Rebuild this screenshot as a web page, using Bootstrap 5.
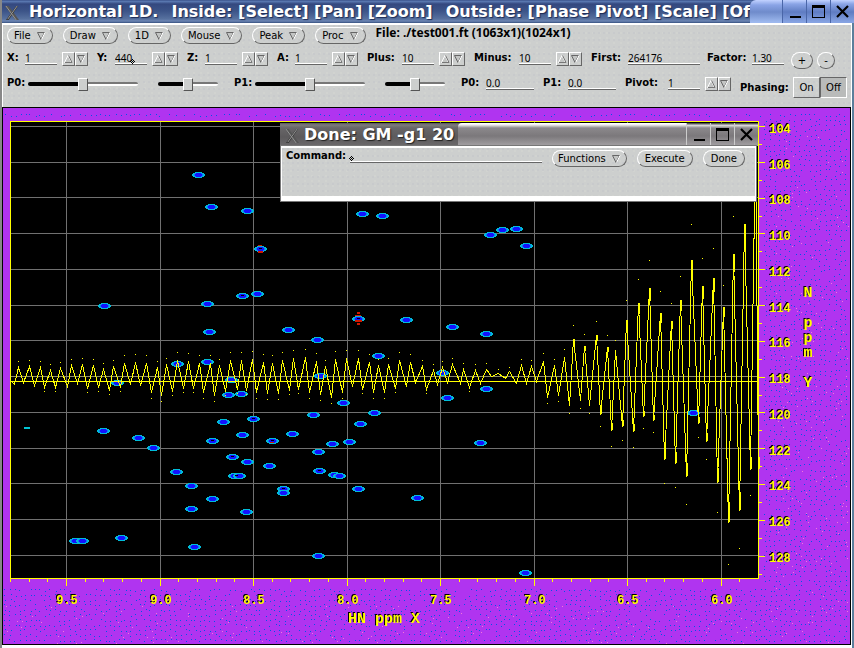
<!DOCTYPE html>
<html lang="en">
<head>
<meta charset="utf-8">
<meta name="viewport" content="width=device-width, initial-scale=1">
<title>Horizontal 1D</title>
<link href="https://cdn.jsdelivr.net/npm/bootstrap@5.3.0/dist/css/bootstrap.min.css" rel="stylesheet">
<style>
  :root { --panel: #cdcfce; --lo: #777; }
  body { font-family: "DejaVu Sans", sans-serif; font-size: 10px; line-height: 12px; color: #000; background: #fff; }
  .app-frame { border-left: 2px solid #888; border-right: 2px solid #5b7f9b; }
  .win-title { height: 23px; color: #fff; font-weight: 700; font-size: 16px; line-height: 23px; white-space: nowrap;
    background: linear-gradient(#2b3f78, #5f7fb8 1px, #34487f 4px, #3c5488 11px, #57719f 19px, #6d86b4 21px, #35507f); }
  .title-text { gap: 13px; text-shadow: 1px 1px 1px #1d2b55; }
  .title-logo { width: 27px; padding-left: 2px; }
  .title-tail { width: 32px; height: 23px; border-radius: 6px 0 0 0; background: linear-gradient(#c2d2ff, #8aa4e6 5px, #6f8bcb 12px, #9db8ee 22px); }
  .win-btn { width: 24px; height: 23px; padding: 0; border: 0; border-left: 1px solid #4a66a8; border-radius: 0; line-height: 0;
    background: linear-gradient(#c2d2ff, #8aa4e6 4px, #5f7cc2 12px, #86a3e2 22px); }
  .tool-panel { background-color: var(--panel); border-top: 2px solid #fff; border-left: 1px solid #fff; border-right: 1px solid #fff;
    padding: 2px 4px 9px 4px; }
  .speckle { background-image: radial-gradient(circle at 1px 1px, #c8cacc 1px, transparent 1px), radial-gradient(circle at 2px 3px, #d1d3d0 1px, transparent 1px);
    background-size: 5px 7px, 7px 5px; }
  .pill { height: 17px; padding: 0 6px; font-size: 10px; line-height: 14px; color: #000; background: transparent; border-radius: 9px;
    border: 1px solid; border-color: #fff #666 #666 #fff; display: inline-flex; align-items: center; justify-content: center; gap: 6px; }
  .pill:hover, .pill:focus { background: #d8dad9; }
  .lbl { font-weight: 700; margin: 0; white-space: nowrap; }
  .fname { font-family: "Noto Sans", sans-serif; font-weight: 700; font-size: 12px; }
  .fld { font-family: "Noto Sans", sans-serif; font-size: 10px; line-height: 12px; height: 13px; padding: 0; color: #000; background: transparent; border: 0; border-radius: 0;
    border-bottom: 1px solid #666; box-shadow: inset 0 -1px #fff; outline: 0; }
  .w-num { width: 32px; } .w-mid { width: 48px; } .w-big { width: 72px; }
  .l-one { width: 18px; } .l-rng { width: 21px; } .l-pln { width: 25px; } .l-plus { width: 35px; } .l-first { width: 37px; } .l-pivot { width: 43px; } .l-minus { width: 45px; }
  .grp { display: flex; align-items: flex-start; margin-right: 9px; }
  .grp-s { margin-right: 7px; } .grp-v { margin-right: 16px; } .grp-w { margin-right: 20px; }
  .spin { display: flex; margin-left: 5px; }
  .spin button { width: 13px; height: 14px; padding: 0; line-height: 0; background: transparent; border: 1px solid; border-color: #fff #666 #666 #fff; }
  .row-one { height: 25px; gap: 10px; }
  .row-two { height: 25px; }
  .sld { appearance: none; height: 13px; margin: 0; background: transparent; }
  .sld-l { width: 110px; } .sld-s { width: 60px; }
  .sld::-webkit-slider-runnable-track { height: 4px; border-radius: 2px;
    background: linear-gradient(#000, #000) 0 0 / 50% 100% no-repeat, linear-gradient(#777 50%, #fff 50%); }
  .sld::-webkit-slider-thumb { appearance: none; width: 10px; height: 13px; margin-top: -4px; background: var(--panel); border: 1px solid; border-color: #fff #555 #555 #fff; border-radius: 1px; }
  .round-btn { height: 17px; padding: 0; line-height: 14px; color: #000; background: transparent; border: 1px solid; border-color: #fff #666 #666 #fff; border-radius: 9px; }
  .w-plus { width: 22px; } .w-minus { width: 18px; margin-left: 4px; }
  .phase-lbl { padding-top: 5px; width: 55px; }
  .tog { width: 27px; height: 21px; padding: 0; font-size: 10px; background: transparent; border: 1px solid; border-color: #fff #666 #666 #fff; }
  .tog.active { background: #b9bbba; border-color: #666 #fff #fff #666; }
  .plot-box { background: #b034f0; border: 1px solid #000; margin-right: 1px; }
  .plot-box > svg { display: block; }
  .app-foot { height: 3px; }
  .dlg { left: 277px; top: 15px; width: 478px; }
  .dlg .win-title { background: linear-gradient(#5a585a, #7d7b7d 2px, #686668 5px, #5c5a5c 14px, #6a686a 22px); }
  .dlg .title-text { text-shadow: 1px 1px 1px #222; width: 150px; }
  .dlg-bar { border-radius: 4px 0 0 0; background: linear-gradient(#fff 1px, #e8e6e8 2px, #8c898c 5px, #7b787b 13px, #a09da0 22px); }
  .dlg .win-btn { border-left: 1px solid #ccc; background: linear-gradient(#555 1px, #e8e6e8 2px, #8c898c 5px, #7b787b 13px, #a09da0 22px); }
  .dlg-body { background-color: var(--panel); border: 1px solid #fff; border-top-width: 2px; border-bottom: 5px solid #fff; outline: 1px solid #777; height: 55px; margin: 0 2px 0 1px; padding: 2px 10px 0 4px; gap: 10px; }
  .pill-n { padding: 0 5px; } .pill-e { padding: 0 7px; }
  .caret { position: absolute; line-height: 0; }
  .caret-y { left: 33px; top: 7px; } .caret-c { left: -1px; top: 6px; }
  .tick-txt { font: 700 12px "Liberation Mono", monospace; }
  .axis-txt { font: 700 15px "Liberation Mono", monospace; }
  .under-shade { filter: drop-shadow(-1px -1px 0 #000); }
</style>
</head>
<body>
<svg class="d-none" aria-hidden="true">
  <symbol id="logo" viewBox="0 0 17 17"><path d="M1 1h4l11 15h-4z" fill="#555"/><path d="M15 1h-2L2 16h3z" fill="#383838"/><path d="M2 1l11 15M14 1L4 15" stroke="#9a9a9a" fill="none"/></symbol>
  <symbol id="dn" viewBox="0 0 9 8"><path d="M.5 .5h7L4 7.500z" fill="#c3c5c4" stroke="#666"/><path d="M8 .5L4.500 7.500" stroke="#fff" fill="none"/></symbol>
  <symbol id="up" viewBox="0 0 9 8"><path d="M.5 7.500h7L4 .5z" fill="#c3c5c4" stroke="#fff"/><path d="M4.500 .5L8 7.500H1" stroke="#777" fill="none"/></symbol>
  <symbol id="min" viewBox="0 0 23 23"><path d="M7 16h11v2H7z"/></symbol>
  <symbol id="max" viewBox="0 0 23 23"><path d="M5 5h13v13H5zM6 8v9h11V8z" fill-rule="evenodd"/></symbol>
  <symbol id="cls" viewBox="0 0 23 23"><path d="M6 6l11 11M17 6L6 17" stroke="#000" stroke-width="2.200"/></symbol>
  <symbol id="crt" viewBox="0 0 5 5"><path d="M2 0h1v1H2zM1 1h1v1H1zM3 1h1v1H3zM0 2h1v1H0zM2 2h1v1H2zM4 2h1v1H4zM1 3h1v1H1zM3 3h1v1H3zM2 4h1v1H2z"/></symbol>
</svg>

<div class="app-frame">
  <header class="win-title d-flex align-items-start">
    <div class="title-logo flex-shrink-0"><svg width="16" height="16"><use href="#logo"/></svg></div>
    <div class="title-text d-flex flex-fill"><span>Horizontal 1D.</span><span>Inside: [Select] [Pan] [Zoom]</span><span>Outside: [Phase Pivot] [Scale] [Of</span></div>
    <div class="title-tail flex-shrink-0"></div>
    <button class="win-btn flex-shrink-0" aria-label="Minimize"><svg width="23" height="23"><use href="#min"/></svg></button>
    <button class="win-btn flex-shrink-0" aria-label="Maximize"><svg width="23" height="23"><use href="#max"/></svg></button>
    <button class="win-btn flex-shrink-0" aria-label="Close"><svg width="23" height="23"><use href="#cls"/></svg></button>
  </header>

  <section class="tool-panel speckle">
    <div class="row-one d-flex align-items-start">
      <button class="pill">File <svg width="9" height="8"><use href="#dn"/></svg></button>
      <button class="pill">Draw <svg width="9" height="8"><use href="#dn"/></svg></button>
      <button class="pill">1D <svg width="9" height="8"><use href="#dn"/></svg></button>
      <button class="pill">Mouse <svg width="9" height="8"><use href="#dn"/></svg></button>
      <button class="pill">Peak <svg width="9" height="8"><use href="#dn"/></svg></button>
      <button class="pill">Proc <svg width="9" height="8"><use href="#dn"/></svg></button>
      <span class="fname text-nowrap">File: ./test001.ft (1063x1)(1024x1)</span>
    </div>
    <div class="row-two d-flex align-items-start">
      <div class="grp"><label class="lbl l-one" for="fx">X:</label><input class="fld w-num" id="fx" value="1"><span class="spin"><button aria-label="X up"><svg width="9" height="8"><use href="#up"/></svg></button><button aria-label="X down"><svg width="9" height="8"><use href="#dn"/></svg></button></span></div>
      <div class="grp position-relative"><label class="lbl l-one" for="fy">Y:</label><input class="fld w-num" id="fy" value="440"><span class="caret caret-y"><svg width="5" height="5"><use href="#crt"/></svg></span><span class="spin"><button aria-label="Y up"><svg width="9" height="8"><use href="#up"/></svg></button><button aria-label="Y down"><svg width="9" height="8"><use href="#dn"/></svg></button></span></div>
      <div class="grp"><label class="lbl l-one" for="fz">Z:</label><input class="fld w-num" id="fz" value="1"><span class="spin"><button aria-label="Z up"><svg width="9" height="8"><use href="#up"/></svg></button><button aria-label="Z down"><svg width="9" height="8"><use href="#dn"/></svg></button></span></div>
      <div class="grp"><label class="lbl l-one" for="fa">A:</label><input class="fld w-num" id="fa" value="1"><span class="spin"><button aria-label="A up"><svg width="9" height="8"><use href="#up"/></svg></button><button aria-label="A down"><svg width="9" height="8"><use href="#dn"/></svg></button></span></div>
      <div class="grp"><label class="lbl l-plus" for="fplus">Plus:</label><input class="fld w-num" id="fplus" value="10"><span class="spin"><button aria-label="Plus up"><svg width="9" height="8"><use href="#up"/></svg></button><button aria-label="Plus down"><svg width="9" height="8"><use href="#dn"/></svg></button></span></div>
      <div class="grp"><label class="lbl l-minus" for="fminus">Minus:</label><input class="fld w-num" id="fminus" value="10"><span class="spin"><button aria-label="Minus up"><svg width="9" height="8"><use href="#up"/></svg></button><button aria-label="Minus down"><svg width="9" height="8"><use href="#dn"/></svg></button></span></div>
      <div class="grp grp-s"><label class="lbl l-first" for="ffirst">First:</label><input class="fld w-big" id="ffirst" value="264176"></div>
      <div class="grp grp-s"><label class="lbl l-minus" for="ffac">Factor:</label><input class="fld w-num" id="ffac" value="1.30"></div>
      <button class="round-btn w-plus">+</button><button class="round-btn w-minus">-</button>
    </div>
    <div class="d-flex align-items-start">
      <div class="grp grp-w"><label class="lbl l-rng" for="s0">P0:</label><input type="range" class="sld sld-l" id="s0" value="50"></div>
      <div class="grp grp-v"><input type="range" class="sld sld-s" aria-label="P0 fine" value="50"></div>
      <div class="grp grp-w"><label class="lbl l-rng" for="s1">P1:</label><input type="range" class="sld sld-l" id="s1" value="50"></div>
      <div class="grp grp-v"><input type="range" class="sld sld-s" aria-label="P1 fine" value="50"></div>
      <div class="grp"><label class="lbl l-pln" for="p0">P0:</label><input class="fld w-mid" id="p0" value="0.0"></div>
      <div class="grp"><label class="lbl l-pln" for="p1">P1:</label><input class="fld w-mid" id="p1" value="0.0"></div>
      <div class="grp"><label class="lbl l-pivot" for="pv">Pivot:</label><input class="fld w-num" id="pv" value="1"><span class="spin"><button aria-label="Pivot up"><svg width="9" height="8"><use href="#up"/></svg></button><button aria-label="Pivot down"><svg width="9" height="8"><use href="#dn"/></svg></button></span></div>
      <span class="lbl phase-lbl">Phasing:</span>
      <div class="d-flex flex-shrink-0"><button class="tog">On</button><button class="tog active">Off</button></div>
    </div>
  </section>

  <main class="plot-box position-relative">
    <svg class="w-100" viewBox="3 108 847 536" role="img" aria-label="Spectrum: N ppm Y against HN ppm X">
      <g id="dots" shape-rendering="crispEdges"></g>
      <path d="M10 121h749v458H10z" fill="#000"/>
      <g id="grid" shape-rendering="crispEdges" fill="none"></g>
      <g id="peaks" shape-rendering="crispEdges"></g>
      <g id="wave" shape-rendering="crispEdges"></g>
      <g class="under-shade" fill="#ff0" id="names"></g>
    </svg>

    <section class="dlg position-absolute">
      <div class="win-title d-flex">
        <div class="flex-shrink-0 ps-1 pe-1"><svg width="16" height="16"><use href="#logo"/></svg></div>
        <div class="title-text flex-shrink-0">Done: GM -g1 20</div>
        <div class="dlg-bar flex-fill ms-1"></div>
        <button class="win-btn" aria-label="Minimize"><svg width="23" height="23"><use href="#min"/></svg></button>
        <button class="win-btn" aria-label="Maximize"><svg width="23" height="23"><use href="#max"/></svg></button>
        <button class="win-btn" aria-label="Close"><svg width="23" height="23"><use href="#cls"/></svg></button>
      </div>
      <div class="dlg-body speckle d-flex align-items-start">
        <div class="d-flex flex-fill">
          <label class="lbl me-1" for="cmd">Command:</label>
          <div class="position-relative flex-fill"><input class="fld w-100 d-block" id="cmd"><span class="caret caret-c"><svg width="5" height="5"><use href="#crt"/></svg></span></div>
        </div>
        <button class="pill pill-n">Functions <svg width="9" height="8"><use href="#dn"/></svg></button>
        <button class="pill pill-e">Execute</button>
        <button class="pill pill-e">Done</button>
      </div>
    </section>
  </main>
  <div class="app-foot"></div>
</div>

<script>
const put = (id, html) => document.getElementById(id).innerHTML = html;

// Grid, frame and ticks
const gx = [66, 160, 253, 347, 440, 534, 627, 721];
const gy = [126, 162, 197, 233, 269, 305, 340, 376, 412, 448, 483, 519, 555];
let g = '', t = '';
gx.forEach(x => { g += `M${x}.5 122V578`; });
gy.forEach(y => { g += `M11 ${y}.5H758`; });
for (let i = -3; i <= 36; i++) {
  const x = Math.round(66 + i * 18.7);
  if (x < 758) t += `M${x}.5 579v${i % 5 ? 3 : 7}`;
}
for (let i = 0; i <= 25; i++) {
  const y = Math.round(126 + i * 17.9);
  if (y < 578) t += `M759 ${y}.5h${i % 2 ? 3 : 6}`;
}
put('grid', `<path d="${g}" stroke="#707070"/><path d="M11 376.5H758" stroke="#8f8c6a"/><path d="M10.5 121.5h748v457h-748z${t}" stroke="#ff0"/>`);

// Axis labels
const name = (c, x, y, s) => `<text class="${c}" text-anchor="middle" x="${x}" y="${y}">${s}</text>`;
let n = '';
gx.forEach((x, i) => n += name('tick-txt', x + 1, 604, (9.5 - i / 2).toFixed(1)));
gy.forEach((y, i) => n += name('tick-txt', 780, y + 7, 104 + 2 * i));
n += name('axis-txt', 384, 623, 'HN ppm X');
[['N', 297], ['p', 327], ['p', 342], ['m', 357], ['Y', 387]].forEach(([s, y]) => n += name('axis-txt', 808, y, s));
put('names', n);

// Contour peaks
const pk = [[198,174],[211,206],[247,210],[260,248],[242,295],[257,293],[104,305],[207,303],[209,331],[288,329],[177,363],[207,361],[117,382],[231,379],[228,394],[241,393],[103,430],[138,437],[153,447],[223,421],[253,418],[242,434],[212,440],[272,440],[232,456],[247,461],[269,465],[176,471],[234,475],[239,475],[317,339],[358,318],[406,319],[452,326],[486,333],[378,355],[320,375],[442,372],[486,388],[447,397],[343,402],[313,414],[374,412],[360,423],[292,433],[332,443],[349,441],[480,442],[318,451],[319,470],[334,474],[339,475],[693,412],[191,485],[212,498],[191,508],[246,511],[75,540],[82,540],[121,537],[194,546],[283,488],[283,492],[358,488],[417,497],[318,555],[525,572],[362,213],[382,215],[490,234],[502,229],[516,228],[526,245]];
const core = [[260,248],[242,295],[272,440],[253,418],[232,456],[236,475],[358,318],[283,488],[212,440],[319,470]];
let p = '<path d="M24 427h6v2h-6z" fill="#00c4d4"/>', red = '<path d="M258 245h4v1h-4zM258 251h5v2h-5zM270 442h4v1h-4zM355 315h6v1h-6zM355 320h7v2h-7zM357 312h3v2h-3zM357 323h3v2h-3z" fill="#d01800"/>';
pk.forEach(([x, y]) => {
  p += `<path d="M${x-3} ${y-2}h7v1h2v1h1v2h-1v1h-2v1h-7v-1h-2v-1h-1v-2h1v-1h2z" fill="#00bcd8"/><path d="M${x-3} ${y-1}h7v1h1v2h-1v1h-7v-1h-1v-2h1z" fill="#0a78ff"/><path d="M${x-2} ${y-1}h5v1h1v2h-1v1h-5v-1h-1v-2h1z" fill="#1212ff"/>`;
});
core.forEach(([x, y]) => p += `<path d="M${x-1} ${y}h3v1h-3z" fill="#000"/>`);
put('peaks', p + red);

// Trace: alternating maxima and minima
const hi = [[18,367],[29,366],[40,367],[50,370],[60,368],[71,365],[82,364],[93,365],[103,369],[113,366],[124,363],[135,362],[146,363],[157,367],[166,364],[177,360],[188,361],[199,363],[210,363],[219,365],[230,360],[241,360],[252,359],[263,362],[272,363],[282,360],[293,358],[305,357],[316,361],[325,366],[335,359],[346,358],[358,358],[369,362],[378,365],[388,364],[399,360],[410,362],[422,366],[433,370],[442,367],[452,364],[463,369],[475,370],[486,369],[498,373],[509,371],[521,365],[531,366],[543,361],[554,365],[564,357],[573,339],[584,346],[596,335],[607,347],[615,350],[626,320],[638,303],[649,288],[660,313],[671,321],[680,300],[691,260],[702,286],[713,278],[723,307],[733,254],[744,224],[755,140]];
const lo = [[23,382],[34,385],[44,387],[55,387],[67,386],[77,383],[87,388],[98,387],[109,390],[120,387],[130,384],[140,385],[151,392],[161,395],[172,391],[183,388],[193,388],[203,392],[214,395],[225,391],[237,389],[246,390],[256,392],[267,393],[278,393],[289,390],[298,389],[309,392],[320,394],[331,397],[342,392],[352,386],[362,389],[373,392],[384,392],[395,388],[406,386],[415,382],[426,389],[437,384],[447,382],[460,383],[469,387],[480,383],[491,376],[505,378],[516,383],[526,383],[536,381],[547,397],[558,395],[569,405],[580,400],[589,405],[600,414],[611,430],[622,426],[633,431],[643,416],[653,420],[664,459],[675,463],[686,476],[698,423],[706,441],[717,482],[728,522],[739,510],[750,469],[758,469]];
let d = 'M11.5 381.5L14.5 384.5', tips = '', dots = '';
hi.forEach(([x, y], i) => {
  const [a, b] = lo[i];
  const up = Math.round((381 - y) * .14), dn = Math.round((b - 381) * .14);
  d += `L${x}.5 ${y}.5L${a}.5 ${b}.5`;
  if (up > 4) tips += `M${x}.5 ${y}v${up}`;
  if (dn > 4) tips += `M${a}.5 ${b}v-${dn}`;
  if (y > 150) dots += `M${x} ${y - up * 2 - 2}h1v1h-1z`;
  if (a < 755 && b > 386) dots += `M${a} ${b + dn * 2 + 2}h1v1h-1z`;
});
put('wave', `<path d="M11 381.5H758" stroke="#ff0"/><path d="${d}" stroke="#ff0" fill="none"/><path d="${tips}" stroke="#ff0" stroke-width="2"/><path d="${dots}" fill="#ff0"/>`);

// Dithered surround
let seed = 7;
const rnd = k => { seed = (seed * 1103515245 + 12345) % 2147483648; return Math.floor(seed / 2147483648 * k); };
let blue = '', pink = '';
for (let y = 114; y < 642; y += 5) for (let x = 4; x < 846; x += 5) {
  if (x < 762 && y > 118 && y < 586) continue;
  const px = x + rnd(3), py = y + rnd(3);
  if (rnd(10) < 8) blue += `M${px} ${py}h1v1h-1z`;
  if ((y > 602 || (x > 770 && y > 130)) && rnd(9) === 0) pink += `M${px + 2} ${py + 2}h1v1h-1z`;
}
put('dots', `<path d="${blue}" fill="#0058e8"/><path d="${pink}" fill="#f078d8"/>`);
</script>
<script src="https://cdn.jsdelivr.net/npm/bootstrap@5.3.0/dist/js/bootstrap.bundle.min.js"></script>
</body>
</html>
